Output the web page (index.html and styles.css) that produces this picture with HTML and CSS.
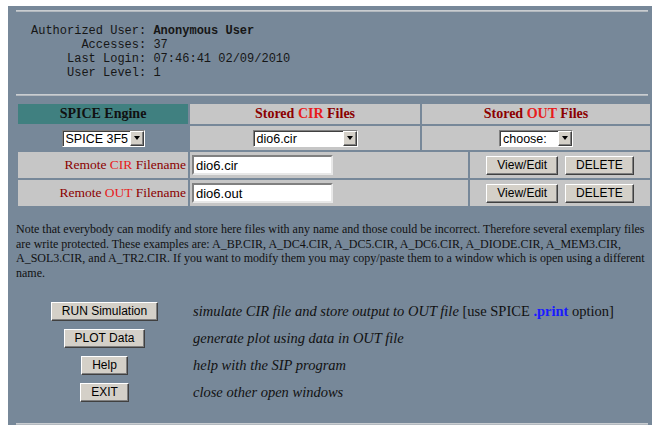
FILE: index.html
```html
<!DOCTYPE html>
<html>
<head>
<meta charset="utf-8">
<title>SPICE Interface Program</title>
<link rel="stylesheet" href="styles.css">
</head>
<body>
<div class="page">
  <hr class="rule">
  <pre class="user-info">Authorized User: <b>Anonymous User</b>
       Accesses: 37
     Last Login: 07:46:41 02/09/2010
     User Level: 1</pre>
  <hr class="rule rule-mid">

  <div class="files">
    <div class="cell head engine"><span>SPICE Engine</span></div>
    <div class="cell head"><span>Stored <span class="hl">CIR</span> Files</span></div>
    <div class="cell head span-2"><span>Stored <span class="hl">OUT</span> Files</span></div>

    <div class="cell bare">
      <span class="combo combo-engine"><span class="combo-text">SPICE 3F5</span><span class="combo-btn"><i class="tri"></i></span></span>
    </div>
    <div class="cell">
      <span class="combo combo-cir"><span class="combo-text">dio6.cir</span><span class="combo-btn"><i class="tri"></i></span></span>
    </div>
    <div class="cell span-2">
      <span class="combo combo-out"><span class="combo-text">choose:</span><span class="combo-btn"><i class="tri"></i></span></span>
    </div>

    <div class="cell label"><span>Remote <span class="hl">CIR</span> Filename</span></div>
    <div class="cell field span-2"><input class="text-in" type="text" value="dio6.cir"></div>
    <div class="cell actions-cell"><button class="btn">View/Edit</button><button class="btn">DELETE</button></div>

    <div class="cell label"><span>Remote <span class="hl">OUT</span> Filename</span></div>
    <div class="cell field span-2"><input class="text-in" type="text" value="dio6.out"></div>
    <div class="cell actions-cell"><button class="btn">View/Edit</button><button class="btn">DELETE</button></div>
  </div>

  <p class="note">Note that everybody can modify and store here files with any name and those could be incorrect. Therefore several exemplary files are write protected. These examples are: A_BP.CIR, A_DC4.CIR, A_DC5.CIR, A_DC6.CIR, A_DIODE.CIR, A_MEM3.CIR,<br>A_SOL3.CIR, and A_TR2.CIR. If you want to modify them you may copy/paste them to a window which is open using a different name.</p>

  <div class="commands">
    <div class="cmd-btn"><button class="btn">RUN Simulation</button></div>
    <div class="cmd-desc"><span><i>simulate CIR file and store output to OUT file</i> [use SPICE <b class="kw">.print</b> option]</span></div>
    <div class="cmd-btn"><button class="btn">PLOT Data</button></div>
    <div class="cmd-desc"><span><i>generate plot using data in OUT file</i></span></div>
    <div class="cmd-btn"><button class="btn">Help</button></div>
    <div class="cmd-desc"><span><i>help with the SIP program</i></span></div>
    <div class="cmd-btn"><button class="btn">EXIT</button></div>
    <div class="cmd-desc"><span><i>close other open windows</i></span></div>
  </div>

  <hr class="rule rule-end">
</div>
</body>
</html>
```
FILE: styles.css
```css
html, body {
  margin: 0;
  padding: 0;
  background: #ffffff;
  overflow: hidden;
}

.page {
  margin: 6px 0 0 8px;
  padding: 4px 4px 0 8px;
  background: #778899;
  min-height: 430px;
  box-sizing: border-box;
  font-family: "Liberation Serif", "Times New Roman", serif;
  color: #111;
}

/* horizontal separators */
.rule {
  margin: 0;
  height: 0;
  border: 0;
  border-top: 1px solid #c9cdd1;
  border-bottom: 1px solid #b3b9bf;
}
.rule-mid { margin-top: 14px; }
.rule-end { margin-top: 17px; }

/* login summary */
.user-info {
  margin: 12px 0 0 15px;
  font-family: "Liberation Mono", "Courier New", monospace;
  font-size: 12px;
  line-height: 14px;
  color: #161616;
}

/* file table */
.files {
  display: grid;
  grid-template-columns: 170px 230px 46px 180px;
  grid-template-rows: 20px 24px 26px 26px;
  gap: 2px;
  margin: 8px 0 0 2px;
}
.cell {
  background: #c6c6c6;
  display: flex;
  align-items: center;
  justify-content: center;
  white-space: nowrap;
}
.span-2 { grid-column: span 2; }
.cell.bare { background: transparent; }

.head {
  font-weight: bold;
  font-size: 14px;
  color: #8b0000;
}
.head.engine {
  background: #408080;
  color: #111;
}
.hl { color: #e81c1c; }

.label {
  justify-content: flex-end;
  padding-right: 2px;
  font-size: 13.5px;
  color: #8b0000;
}
.field {
  justify-content: flex-start;
  padding-left: 2px;
}
.actions-cell { gap: 7px; }

/* drop-down lists */
.combo {
  display: inline-flex;
  height: 17px;
  box-sizing: border-box;
  border: 1px solid;
  border-color: #808080 #ffffff #ffffff #808080;
  background: #fff;
  font-family: "Liberation Sans", Arial, sans-serif;
  font-size: 12.5px;
  color: #000;
}
.combo-engine { width: 83px; }
.combo-cir { width: 105px; }
.combo-out { width: 74px; }
.combo-text {
  flex: 1;
  padding-left: 2px;
  line-height: 15px;
  border-top: 1px solid #404040;
  border-left: 1px solid #404040;
  white-space: nowrap;
  overflow: hidden;
}
.combo-btn {
  width: 14px;
  box-sizing: border-box;
  background: #d4d0c8;
  border: 1px solid;
  border-color: #ffffff #404040 #404040 #ffffff;
  box-shadow: inset -1px -1px #808080;
  display: flex;
  align-items: center;
  justify-content: center;
}
.tri {
  width: 0;
  height: 0;
  border-left: 3.5px solid transparent;
  border-right: 3.5px solid transparent;
  border-top: 4px solid #000;
}

/* text inputs */
.text-in {
  width: 141px;
  height: 20px;
  box-sizing: border-box;
  margin: 0;
  padding: 0 2px;
  border: 2px solid;
  border-color: #808080 #e8e8e8 #e8e8e8 #808080;
  background: #fff;
  font-family: "Liberation Sans", Arial, sans-serif;
  font-size: 13px;
  color: #000;
  outline: none;
}

/* push buttons */
.btn {
  height: 19px;
  margin: 0;
  padding: 0 10px;
  box-sizing: border-box;
  background: #d4d0c8;
  border: 1px solid;
  border-color: #ffffff #404040 #404040 #ffffff;
  box-shadow: inset -1px -1px #808080;
  font-family: "Liberation Sans", Arial, sans-serif;
  font-size: 12px;
  line-height: 16px;
  color: #000;
}

/* note text */
.note {
  margin: 16px 0 0;
  font-size: 12px;
  line-height: 14.7px;
  color: #111;
}

/* command list */
.commands {
  display: grid;
  grid-template-columns: 177px auto;
  grid-auto-rows: 27px;
  margin-top: 17px;
}
.cmd-btn {
  display: flex;
  align-items: center;
  justify-content: center;
}
.cmd-desc {
  display: flex;
  align-items: center;
  white-space: pre;
  font-size: 14.5px;
  color: #111;
}
.kw { color: #1a1aff; }
```
